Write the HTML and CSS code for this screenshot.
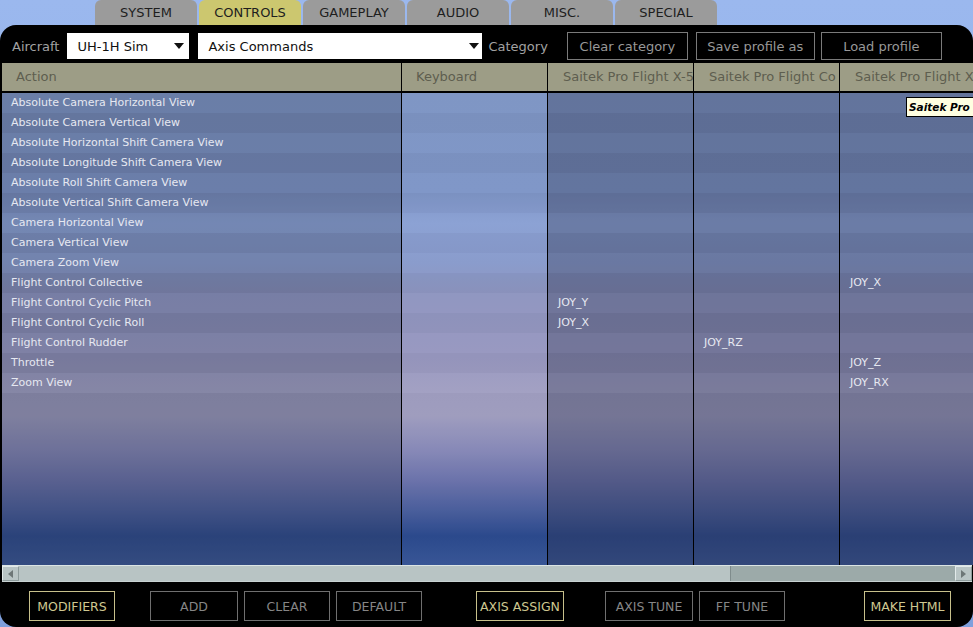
FILE: index.html
```html
<!DOCTYPE html>
<html lang="en">
<head>
<meta charset="utf-8">
<title>Controls</title>
<link rel="stylesheet" href="styles.css">
</head>
<body>
<nav class="tabs">
  <div class="tab">SYSTEM</div>
  <div class="tab active">CONTROLS</div>
  <div class="tab">GAMEPLAY</div>
  <div class="tab">AUDIO</div>
  <div class="tab">MISC.</div>
  <div class="tab">SPECIAL</div>
</nav>
<main class="panel">
  <div class="toolbar">
    <span class="label lbl-aircraft">Aircraft</span>
    <div class="select sel-aircraft"><span>UH-1H Sim</span><svg class="caret" width="10" height="6" viewBox="0 0 10 6"><path d="M0 0H10L5 6Z"/></svg></div>
    <div class="select sel-cat"><span>Axis Commands</span><svg class="caret" width="10" height="6" viewBox="0 0 10 6"><path d="M0 0H10L5 6Z"/></svg></div>
    <span class="label lbl-cat">Category</span>
    <button class="tbtn b-clear">Clear category</button>
    <button class="tbtn b-save">Save profile as</button>
    <button class="tbtn b-load">Load profile</button>
  </div>

  <section class="grid">
    <div class="row head">
      <div class="cell">Action</div>
      <div class="cell">Keyboard</div>
      <div class="cell">Saitek Pro Flight X-5</div>
      <div class="cell">Saitek Pro Flight Co</div>
      <div class="cell">Saitek Pro Flight X</div>
    </div>
    <div class="tbody">
      <div class="row"><div class="cell">Absolute Camera Horizontal View</div><div class="cell"></div><div class="cell"></div><div class="cell"></div><div class="cell"></div></div>
      <div class="row"><div class="cell">Absolute Camera Vertical View</div><div class="cell"></div><div class="cell"></div><div class="cell"></div><div class="cell"></div></div>
      <div class="row"><div class="cell">Absolute Horizontal Shift Camera View</div><div class="cell"></div><div class="cell"></div><div class="cell"></div><div class="cell"></div></div>
      <div class="row"><div class="cell">Absolute Longitude Shift Camera View</div><div class="cell"></div><div class="cell"></div><div class="cell"></div><div class="cell"></div></div>
      <div class="row"><div class="cell">Absolute Roll Shift Camera View</div><div class="cell"></div><div class="cell"></div><div class="cell"></div><div class="cell"></div></div>
      <div class="row"><div class="cell">Absolute Vertical Shift Camera View</div><div class="cell"></div><div class="cell"></div><div class="cell"></div><div class="cell"></div></div>
      <div class="row"><div class="cell">Camera Horizontal View</div><div class="cell"></div><div class="cell"></div><div class="cell"></div><div class="cell"></div></div>
      <div class="row"><div class="cell">Camera Vertical View</div><div class="cell"></div><div class="cell"></div><div class="cell"></div><div class="cell"></div></div>
      <div class="row"><div class="cell">Camera Zoom View</div><div class="cell"></div><div class="cell"></div><div class="cell"></div><div class="cell"></div></div>
      <div class="row"><div class="cell">Flight Control Collective</div><div class="cell"></div><div class="cell"></div><div class="cell"></div><div class="cell">JOY_X</div></div>
      <div class="row"><div class="cell">Flight Control Cyclic Pitch</div><div class="cell"></div><div class="cell">JOY_Y</div><div class="cell"></div><div class="cell"></div></div>
      <div class="row"><div class="cell">Flight Control Cyclic Roll</div><div class="cell"></div><div class="cell">JOY_X</div><div class="cell"></div><div class="cell"></div></div>
      <div class="row"><div class="cell">Flight Control Rudder</div><div class="cell"></div><div class="cell"></div><div class="cell">JOY_RZ</div><div class="cell"></div></div>
      <div class="row"><div class="cell">Throttle</div><div class="cell"></div><div class="cell"></div><div class="cell"></div><div class="cell">JOY_Z</div></div>
      <div class="row"><div class="cell">Zoom View</div><div class="cell"></div><div class="cell"></div><div class="cell"></div><div class="cell">JOY_RX</div></div>
      <div class="row filler"><div class="cell"></div><div class="cell"></div><div class="cell"></div><div class="cell"></div><div class="cell"></div></div>
    </div>
    <div class="tooltip">Saitek Pro</div>
  </section>

  <div class="hscroll">
    <div class="sbtn"><svg width="5" height="8" viewBox="0 0 5 8"><path d="M5 0V8L0 4Z"/></svg></div>
    <div class="track"><div class="thumb"></div></div>
    <div class="sbtn"><svg width="5" height="8" viewBox="0 0 5 8"><path d="M0 0V8L5 4Z"/></svg></div>
  </div>

  <div class="bottombar">
    <button class="bbtn on b-mod">MODIFIERS</button>
    <button class="bbtn b-add">ADD</button>
    <button class="bbtn b-clr">CLEAR</button>
    <button class="bbtn b-def">DEFAULT</button>
    <button class="bbtn on b-axa">AXIS ASSIGN</button>
    <button class="bbtn b-axt">AXIS TUNE</button>
    <button class="bbtn b-fft">FF TUNE</button>
    <button class="bbtn on b-html">MAKE HTML</button>
  </div>
</main>
</body>
</html>
```

FILE: styles.css
```css
* { box-sizing: border-box; }
html, body {
  margin: 0;
  padding: 0;
  width: 973px;
  height: 627px;
  overflow: hidden;
}
body {
  font-family: "DejaVu Sans", "Liberation Sans", sans-serif;
  background: linear-gradient(180deg, #9bb8ee 0%, #8fb0ea 60%, #7e9fdc 100%);
}

/* tabs */
.tabs {
  display: flex;
  gap: 2px;
  padding-left: 95px;
  height: 25px;
}
.tab {
  width: 102px;
  height: 25px;
  background: #9b9b9b;
  border-radius: 6px 6px 0 0;
  color: #1e1e1e;
  font-size: 13px;
  line-height: 25px;
  text-align: center;
}
.tab.active { background: #ccc76f; }

/* panel */
.panel {
  height: 602px;
  background: #000;
  border-radius: 16px;
  overflow: hidden;
  display: flex;
  flex-direction: column;
}

.toolbar {
  display: flex;
  align-items: center;
  height: 28px;
  margin-top: 7px;
  padding-left: 12px;
}
.label { color: #a2a2a2; font-size: 13px; }
.select {
  height: 26px;
  background: #fff;
  display: flex;
  align-items: center;
  justify-content: space-between;
  padding: 0 5px 0 10px;
  color: #111;
  font-size: 13px;
}
.caret { fill: #111; }
.sel-aircraft { width: 122px; margin-left: 8px; }
.sel-cat { width: 284px; margin-left: 9px; padding-right: 3px; }
.lbl-cat { margin-left: 6px; }
.tbtn {
  height: 28px;
  background: #000;
  border: 1px solid #7a7a7a;
  color: #989898;
  font: 13px "DejaVu Sans", sans-serif;
  padding: 0;
}
.b-clear { width: 121px; margin-left: 19px; }
.b-save { width: 119px; margin-left: 8px; }
.b-load { width: 121px; margin-left: 6px; }

/* grid */
.grid {
  position: relative;
  flex: 1;
  display: flex;
  flex-direction: column;
  margin: 3px 0 0 2px;
  overflow: hidden;
}
.row {
  display: grid;
  grid-template-columns: 400px 146px 146px 146px 1fr;
}
.cell {
  border-right: 1px solid #000;
  white-space: nowrap;
  overflow: hidden;
}
.cell:last-child { border-right: 0; }

.head {
  height: 30px;
  border-bottom: 2px solid #000;
}
.head .cell {
  background: #9d9d86;
  color: #5e5e4f;
  font-size: 13px;
  line-height: 28px;
  padding-left: 14px;
}
.head .cell:nth-child(n+3) { padding-left: 15px; }

.tbody {
  flex: 1;
  display: flex;
  flex-direction: column;
  background: linear-gradient(180deg,
    #8198c7 0px, #8299cb 100px, #8ea5d8 130px, #8c9fd0 170px,
    #9299c4 200px, #9c9cc4 260px, #a6a4c6 300px, #a8a6c8 323px,
    #8e90c0 358px, #7078b2 388px, #4c62a2 418px, #2c4c92 443px, #3a5a9c 473px);
}
.tbody .row { height: 20px; }
.tbody .row .cell {
  color: #e6e8f1;
  font-size: 11px;
  line-height: 20px;
  padding-left: 10px;
}
.tbody .row .cell:first-child { padding-left: 9px; background: rgba(40, 46, 72, 0.25); }
.tbody .row .cell:nth-child(2) { background: rgba(40, 46, 72, 0.02); }
.tbody .row .cell:nth-child(n+3) { background: rgba(40, 46, 72, 0.34); }
.tbody .row:nth-child(even) .cell:first-child { background: rgba(40, 46, 72, 0.32); }
.tbody .row:nth-child(even) .cell:nth-child(2) { background: rgba(40, 46, 72, 0.07); }
.tbody .row:nth-child(even) .cell:nth-child(n+3) { background: rgba(40, 46, 72, 0.40); }
.tbody .row.filler { flex: 1; height: auto; }
.tbody .row.filler .cell { background: none; }

.tooltip {
  position: absolute;
  left: 904px;
  top: 34px;
  width: 90px;
  height: 20px;
  background: #ffffe1;
  border: 1px solid #000;
  color: #000;
  font-size: 10.5px;
  font-weight: bold;
  font-style: italic;
  line-height: 18px;
  padding-left: 2px;
  white-space: nowrap;
}

/* scrollbar */
.hscroll {
  height: 17px;
  margin: 0 1px 0 2px;
  display: flex;
  background: #9caaa9;
  border-top: 1px solid #dbe4e4;
  border-bottom: 1px solid #c8d2d2;
}
.sbtn {
  width: 17px;
  display: flex;
  align-items: center;
  justify-content: center;
  background: #b9c5c5;
  border: 1px solid #e2eaea;
  border-right-color: #8e9c9c;
  border-bottom-color: #8e9c9c;
}
.sbtn svg { fill: #6d7777; }
.track { flex: 1; display: flex; }
.thumb {
  width: 712px;
  background: #b8c4c4;
  border-right: 1px solid #7f8c8c;
}

/* bottom bar */
.bottombar {
  height: 45px;
  display: flex;
  align-items: flex-start;
  padding-top: 9px;
}
.bbtn {
  height: 30px;
  background: #000;
  border: 1px solid #6f6f6f;
  color: #868686;
  font: 12.5px "DejaVu Sans", sans-serif;
  padding: 0;
}
.bbtn.on { border-color: #c7c08b; color: #cfc890; }
.b-mod { width: 86px; margin-left: 29px; }
.b-add { width: 88px; margin-left: 35px; }
.b-clr { width: 86px; margin-left: 6px; }
.b-def { width: 86px; margin-left: 6px; }
.b-axa { width: 88px; margin-left: 54px; }
.b-axt { width: 88px; margin-left: 41px; }
.b-fft { width: 86px; margin-left: 6px; }
.b-html { width: 87px; margin-left: 79px; }
```
